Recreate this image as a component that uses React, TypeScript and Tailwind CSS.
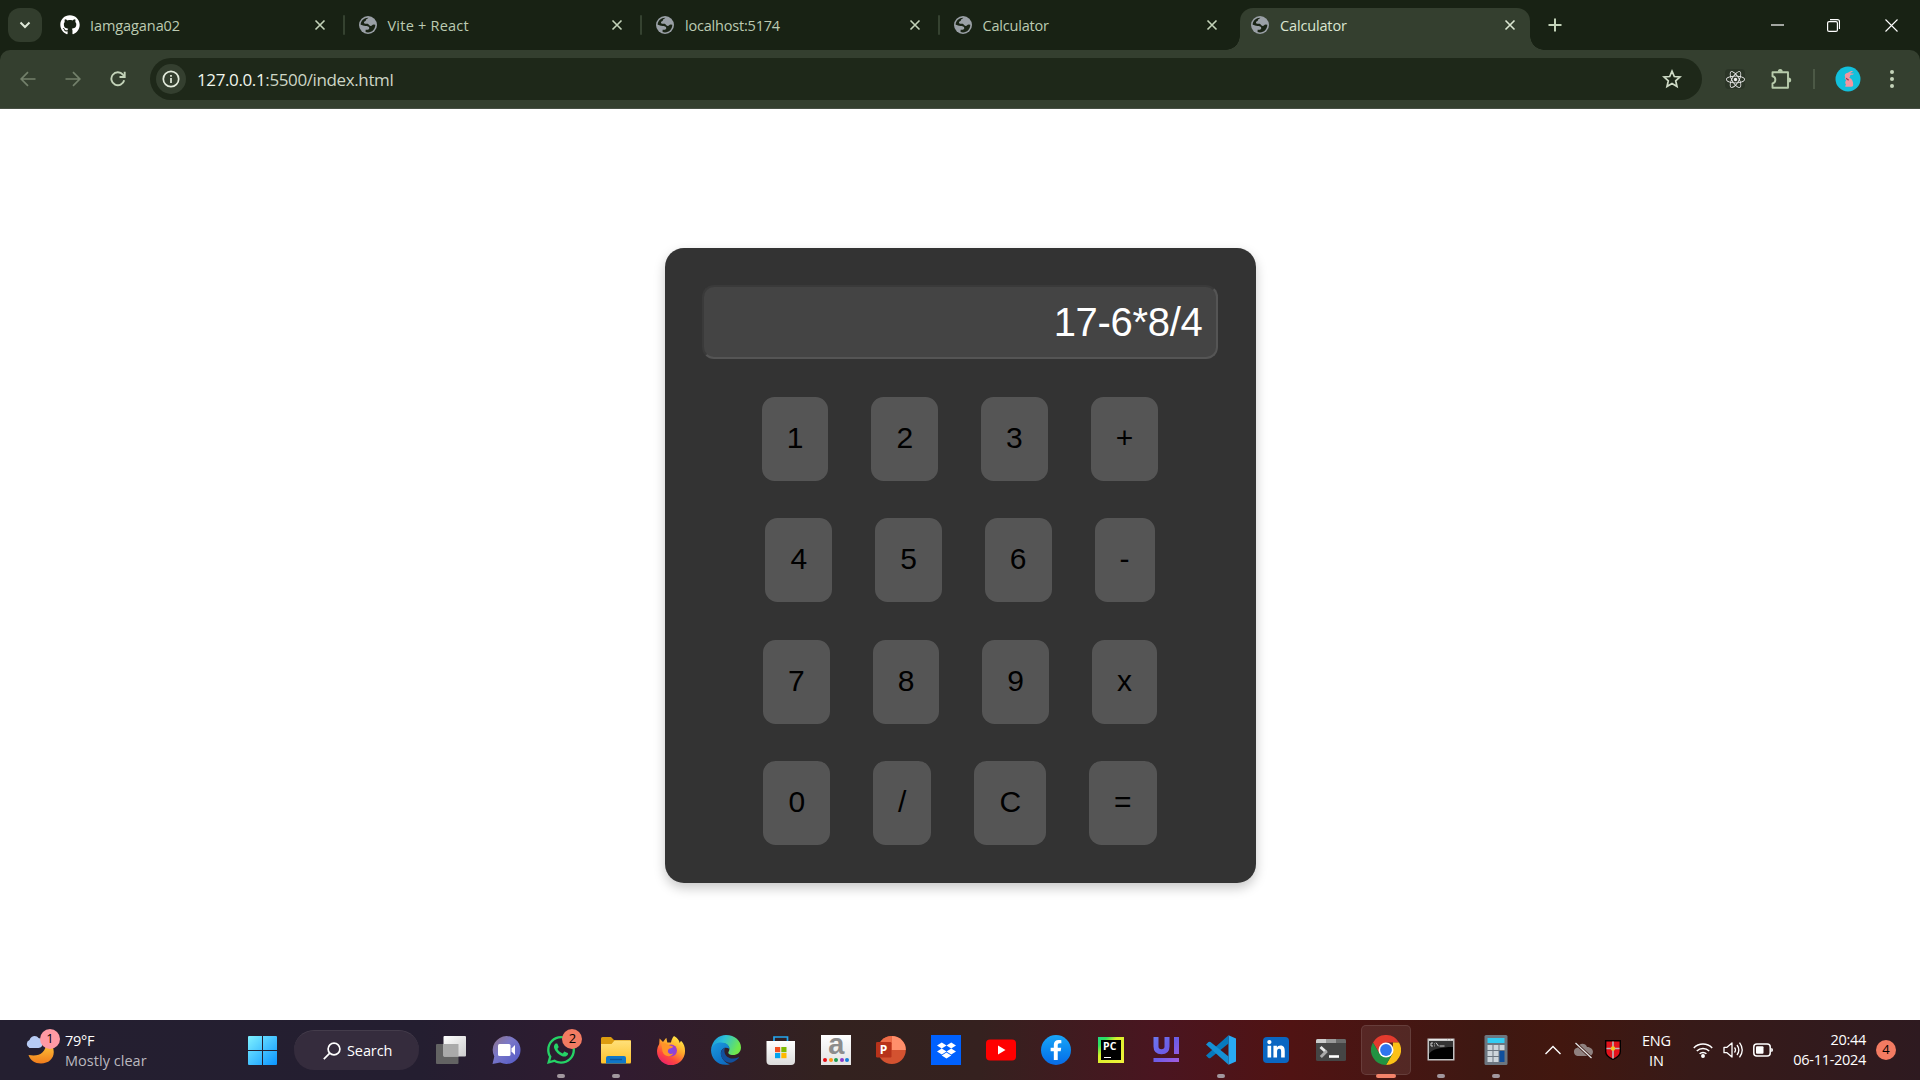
import React from "react";
import { FaReact, FaGithub, FaWhatsapp, FaDropbox, FaFacebookF, FaLinkedinIn } from "react-icons/fa";

const ui = "font-['Open_Sans','Noto_Sans',sans-serif]";

const Globe = () => (
  <svg viewBox="0 0 24 24" className="h-[18px] w-[18px] shrink-0">
    <circle cx="12" cy="12" r="12" fill="#9aa0a6" />
    <path className="fill-[#1a2415]" d="M12.500 2.200c-1 1.500-3.300 1.600-3.300 3.500 0 1.700-2.600 1-2.600 3 0 2.300 3.300 1.500 5 1.700 1.700.2 1.900 3 4 2.900 1.800 0 2-1.900 3.900-1.900l2.300.3C21.700 17.500 17.500 21.900 12 21.900c-1.200 0-2.200-.2-3.200-.5v-3c2.200 0 4.700.3 4.900-2.100.2-2.300-2.800-2.900-5.100-2.900-2.600 0-4-1.500-6.400-1.700C2.300 6 7 2 12.500 2.200z" />
  </svg>
);

const Close = ({ color }: { color: string }) => (
  <svg viewBox="0 0 12 12" className="h-3 w-3 shrink-0" stroke={color} strokeWidth="1.600" fill="none">
    <path d="M1.500 1.500l9 9M10.500 1.500l-9 9" />
  </svg>
);

const tabs = [
  { title: "Iamgagana02", github: true, spacing: "tracking-[-0.08px]" },
  { title: "Vite + React", spacing: "tracking-[0.22px]" },
  { title: "localhost:5174", spacing: "tracking-[-0.2px]" },
  { title: "Calculator", spacing: "tracking-[-0.2px]" },
];

function TabStrip() {
  return (
    <div className="flex h-[50px] items-center bg-[#182214]">
      <div className="ml-2 flex h-[34px] w-[34px] items-center justify-center rounded-xl bg-[#323d2d]">
        <svg viewBox="0 0 12 12" className="h-3 w-3" fill="none" stroke="#dfe8d8" strokeWidth="2"><path d="M1.500 3.500L6 8l4.500-4.500" /></svg>
      </div>
      <div className="ml-[5px] flex">
        {tabs.map((t, i) => (
          <div key={i} className="flex h-[34px] w-[297.500px] items-center">
            <div className="ml-3 flex w-[22px] justify-center">
              {t.github ? <FaGithub className="h-5 w-5 text-white" /> : <Globe />}
            </div>
            <span className={`ml-[9px] flex-1 pt-0.5 text-[14.500px] text-[#bccbb2] ${t.spacing}`}>{t.title}</span>
            <Close color="#c3d3b9" />
            <div className={i < 3 ? "ml-[17px] h-5 w-0.5 rounded bg-[#354230]" : "ml-[17px] h-5 w-0.5"} />
          </div>
        ))}
      </div>
      <div className="ml-[3px] flex h-[50px] items-end">
        <div className="relative flex h-[42px] w-[290px] items-center rounded-t-[13px] bg-[#343f2f] pb-[8px]">
          <div className="absolute -left-[14px] bottom-0 h-[14px] w-[14px] bg-[radial-gradient(circle_at_0_0,transparent_13.500px,#343f2f_14px)]" />
          <div className="absolute -right-[14px] bottom-0 h-[14px] w-[14px] bg-[radial-gradient(circle_at_100%_0,transparent_13.500px,#343f2f_14px)]" />
          <div className="ml-[9px] flex w-[22px] justify-center"><Globe /></div>
          <span className="ml-[9px] flex-1 pt-0.5 text-[14.500px] tracking-[-0.15px] text-[#dbe6d2]">Calculator</span>
          <Close color="#dbe6d2" />
          <div className="w-3.5" />
        </div>
      </div>
      <svg viewBox="0 0 14 14" className="ml-[18px] h-3.5 w-3.5" stroke="#c3d3b9" strokeWidth="2"><path d="M7 .5v13M.5 7h13" /></svg>
      <div className="ml-auto flex items-center pr-[22px]">
        <svg viewBox="0 0 13 13" className="h-[13px] w-[13px]" stroke="#fff" strokeWidth="1.200"><path d="M0 6h13" /></svg>
        <svg viewBox="0 0 13 13" className="ml-[43px] h-[13px] w-[13px]" stroke="#fff" strokeWidth="1.200" fill="none"><rect x=".6" y="2.600" width="9.800" height="9.800" rx="1.500" /><path d="M3 .7h7.500a2 2 0 0 1 2 2V10" /></svg>
        <svg viewBox="0 0 13 13" className="ml-[45px] h-[13px] w-[13px]" stroke="#fff" strokeWidth="1.100"><path d="M.5.5l12 12M12.500.5l-12 12" /></svg>
      </div>
    </div>
  );
}

function Toolbar() {
  return (
    <div className="bg-[#182214]">
      <div className="flex h-[59px] items-center rounded-t-[10px] border-b border-[#474f44] bg-[#343f2f]">
        <svg viewBox="0 0 16 16" className="ml-5 h-4 w-4" stroke="#73806b" strokeWidth="1.700" fill="none"><path d="M15.500 8H1.500M8 1.200L1.200 8 8 14.800" /></svg>
        <svg viewBox="0 0 16 16" className="ml-[29px] h-4 w-4" stroke="#73806b" strokeWidth="1.700" fill="none"><path d="M.5 8h14M8 1.200L14.800 8 8 14.800" /></svg>
        <svg viewBox="0 0 16 16" className="ml-[28.500px] h-4 w-4" stroke="#c3d3b9" strokeWidth="1.900" fill="none"><path d="M14.200 9.300A6.500 6.500 0 1 1 12.900 3.600L14.500 5.300" /><path d="M14.700 .8v5.200H9.500" /></svg>
        <div className="ml-[24.500px] flex h-[42px] w-[1552px] items-center rounded-full bg-[#1e2819]">
          <div className="ml-[6px] flex h-[30px] w-[30px] items-center justify-center rounded-full bg-[#343f2f]">
            <svg viewBox="0 0 18 18" className="h-[18px] w-[18px]" stroke="#e3ebdc" fill="none" strokeWidth="1.700"><circle cx="9" cy="9" r="7.700" /><path d="M9 8v5M9 5v1.800" /></svg>
          </div>
          <span className="ml-[11px] pt-px text-[17px] tracking-[-0.38px] text-[#cdd6c6]"><span className="text-[#f1f6ec]">127.0.0.1</span>:5500/index.html</span>
          <svg viewBox="0 0 20 20" className="mr-5 ml-auto h-5 w-5" stroke="#cfdbc6" strokeWidth="1.700" fill="none"><path d="M10 2.200l2.300 5.300 5.700.5-4.300 3.800 1.300 5.700-5-3-5 3 1.300-5.700L2 8l5.700-.5z" /></svg>
        </div>
        <div className="ml-[23px] flex h-5 w-5 items-center justify-center rounded-sm bg-[#2b3527]"><FaReact className="h-[19px] w-[19px] text-[#f0f0f0]" /></div>
        <svg viewBox="0 0 22 22" className="ml-[25px] h-[22px] w-[22px]" stroke="#b7cbab" strokeWidth="1.900" fill="none" strokeLinejoin="round"><path d="M2.500 4.200H18V19.700H2.500V15.500C6.300 14.700 6.300 9 2.500 8.300z" /><path d="M7.700 3.700a2.500 2.700 0 0 1 5 0zM18.500 9.500a2.700 2.500 0 0 1 0 5z" fill="#b7cbab" stroke="none" /></svg>
        <div className="ml-[21px] h-5 w-0.5 bg-[#4c5946]" />
        <svg viewBox="0 0 26 26" className="ml-[19.500px] h-[26px] w-[26px]">
          <circle cx="13" cy="13" r="12.500" fill="#12c0dc" />
          <path d="M9.700 9.500c.3-1.800 1.700-2.700 3.300-2.700 1.400-1.300 3.200-1.900 5-1.800-.7 1-1.900 1.700-3.200 2.300l4.400.5c-1.200.9-2.700 1.100-3.900 1.200 0 1.200-.5 2-1 2.700 2.900 1 4 3.700 3.900 7.400-.1 1.200-.6 1.700-1.700 1.700h-5c-1.700 0-1.800-1.600-.4-1.900-1.400-1.900-.9-3.700.2-5l-1.700-1.200.7-1.200z" fill="#f495a0" />
          <path d="M11 12.200l2.700 2" stroke="#9c3a50" strokeWidth="1.200" />
        </svg>
        <svg viewBox="0 0 6 20" className="ml-[28.500px] h-5 w-1.5" fill="#c3d3b9"><circle cx="3" cy="3" r="2" /><circle cx="3" cy="10" r="2" /><circle cx="3" cy="17" r="2" /></svg>
      </div>
    </div>
  );
}

const rows = [["1", "2", "3", "+"], ["4", "5", "6", "-"], ["7", "8", "9", "x"], ["0", "/", "C", "="]];

function Calculator() {
  return (
    <div className="mt-[139px] h-[635px] w-[591px] rounded-[19px] bg-[#333] pt-[37px] font-['Liberation_Sans',Arial,sans-serif] shadow-[0_5px_12px_rgba(0,0,0,0.22)]">
      <div className="mr-[38px] ml-[37.500px] flex h-[74px] items-center justify-end rounded-[12px] border-2 border-t-[#3a3a3a] border-r-[#555] border-b-[#555] border-l-[#3a3a3a] bg-[#444] pr-[13px] text-[40px] leading-none tracking-[-0.3px] text-white">
        17-6*8/4
      </div>
      <div className="mt-[38px] flex flex-col gap-[37.300px]">
        {rows.map((r, i) => (
          <div key={i} className="flex justify-center gap-[43px]">
            {r.map((k) => (
              <button key={k} className="h-[84px] rounded-[12.500px] bg-[#555] px-[25px] pb-[2px] text-[30px] leading-[34px] text-black">{k}</button>
            ))}
          </div>
        ))}
      </div>
    </div>
  );
}

const i30 = "h-[30px] w-[30px]";

const TaskView = () => (
  <svg viewBox="0 0 30 30" className={i30}>
    <defs><linearGradient id="tv1" x1="0" y1="0" x2="1" y2="1"><stop stopColor="#fff" /><stop offset="1" stopColor="#ccc" /></linearGradient></defs>
    <rect x="0" y="9" width="22.500" height="20" rx="1" fill="#636363" />
    <rect x="7.500" y="1" width="22.500" height="20.500" rx="1" fill="url(#tv1)" />
    <path d="M7.500 9h15v12.500h-15z" fill="#aaa" />
  </svg>
);
const Chat = () => (
  <svg viewBox="0 0 30 30" className={i30}>
    <defs><linearGradient id="ch" x1="0" y1="0" x2="1" y2="1"><stop stopColor="#8f7080" /><stop offset=".4" stopColor="#7b78c8" /><stop offset="1" stopColor="#5058c8" /></linearGradient></defs>
    <path d="M15.500 1a14 14 0 1 1-6.300 26.500L1.500 29l1.800-7.500A14 14 0 0 1 15.500 1z" fill="url(#ch)" />
    <rect x="7" y="9" width="12.500" height="12" rx="1.500" fill="#fff" /><path d="M20.500 13.500l3.500-3.500v10l-3.500-3.500z" fill="#fff" />
  </svg>
);
const Explorer = () => (
  <svg viewBox="0 0 30 30" className={i30}>
    <defs><linearGradient id="ex" x1="0" y1="0" x2="0" y2="1"><stop stopColor="#ffe07a" /><stop offset="1" stopColor="#fdc22a" /></linearGradient></defs>
    <path d="M0 3.500Q0 2 1.500 2H10l3 3H29q1 0 1 1v9H0z" fill="#dc9c10" />
    <path d="M0 9h10.500l3-3.500H29q1 0 1 1V27q0 1.500-1 1.500H1Q0 28.500 0 27z" fill="url(#ex)" />
    <path d="M5 28.500V23q0-2 2-2h16q2 0 2 2v5.500z" fill="#0f77c8" /><path d="M9 24.500h12" stroke="#0a559b" strokeWidth="1.400" />
  </svg>
);
const Firefox = () => (
  <svg viewBox="0 0 30 30" className={i30}>
    <defs>
      <linearGradient id="ff" x1=".8" y1="0" x2=".2" y2="1"><stop stopColor="#fff24a" /><stop offset=".4" stopColor="#ffa52a" /><stop offset=".7" stopColor="#ff4a3d" /><stop offset="1" stopColor="#e81a72" /></linearGradient>
      <radialGradient id="fp"><stop stopColor="#7b4ee8" /><stop offset="1" stopColor="#a23bc8" /></radialGradient>
    </defs>
    <path d="M18 1c3.500 1.500 5.200 4.500 5.700 7l1.300-2.300C28 8.500 29 12 29 15.500A14 13.800 0 1 1 3.200 9l.4-5.500L7 7l3.300-4.200 1 4.700h3.700C15.300 5.200 16.500 2.500 18 1z" fill="url(#ff)" />
    <circle cx="15" cy="15.500" r="6" fill="url(#fp)" />
    <path d="M5.500 9.500c3-2.500 5-1 7 .5l4.700 1.600c-.5 2-4.500 1.400-5 3.500-1.400 3 2 4.900 5 3.500-2.200 4-9.200 3.500-10.700-2z" fill="#ff9428" />
  </svg>
);
const Edge = () => (
  <svg viewBox="0 0 30 30" className={i30}>
    <defs>
      <linearGradient id="eg" x1="0" y1="0" x2="1" y2=".35"><stop stopColor="#1690d8" /><stop offset=".45" stopColor="#2cc0d8" /><stop offset="1" stopColor="#70e84c" /></linearGradient>
      <linearGradient id="eb" x1="0" y1="0" x2=".6" y2="1"><stop stopColor="#1b9be0" /><stop offset="1" stopColor="#0d6cc2" /></linearGradient>
    </defs>
    <path d="M0 15C1 5 8 0 15 0c9 0 15 6 15 12.500 0 5-4 7.500-8 7.500-3.500 0-5.500-1.300-4.400-3.200 2.300-3.200-.2-8.800-6.600-8.800C5.500 8 1 11.500 0 15z" fill="url(#eg)" />
    <path d="M0 15C1 10 5 7.500 10 7.500c5 0 8.500 2.800 8.500 6.500-5-3.500-10 1-8.300 6.500C11.500 25 15 28.500 19 29.300 8 32 0 24.500 0 15z" fill="url(#eb)" />
    <path d="M14 12.500c-4 2-5.300 6-3 10.200 3 5.500 10 7.500 16.800.3.500-.6 0-1-.8-.5-5.500 2.500-12.700.5-13.500-5.500-.2-1.700 0-3 .5-4.500z" fill="#124f9c" />
  </svg>
);
const Store = () => (
  <svg viewBox="0 0 30 30" className={i30}>
    <defs><linearGradient id="st" x1="0" y1="0" x2="0" y2="1"><stop stopColor="#fff" /><stop offset="1" stopColor="#dcdcdc" /></linearGradient></defs>
    <path d="M.5 6h28.500v20q0 4-4 4h-20.500q-4 0-4-4z" fill="url(#st)" />
    <path d="M8 6V2h13.500v4" fill="none" stroke="#25a6ef" strokeWidth="1.700" />
    <path d="M9 12h5.200v5.200H9z" fill="#f25022" /><path d="M15.300 12h5.200v5.200h-5.200z" fill="#7fba00" /><path d="M9 18h5.200v5.200H9z" fill="#00a4ef" /><path d="M15.300 18h5.200v5.200h-5.200z" fill="#ffb900" />
  </svg>
);
const Amazon = () => (
  <div className="flex h-[30px] w-[30px] flex-col items-center bg-gradient-to-b from-white to-[#e2e2e2]">
    <span className="-mt-[3px] h-[24px] font-['Liberation_Sans',sans-serif] text-[29px] leading-[24px] font-bold text-[#8d8d8d]">a</span>
    <div className="mt-[2px] flex gap-[1.500px]">
      <i className="h-1 w-1 rounded-full bg-[#e60b12]" /><i className="h-1 w-1 rounded-full bg-[#ff9718]" /><i className="h-1 w-1 rounded-full bg-[#1d9c50]" /><i className="h-1 w-1 rounded-full bg-[#8a3ccc]" /><i className="h-1 w-1 rounded-full bg-[#1580d8]" />
    </div>
  </div>
);
const PowerPoint = () => (
  <div className="relative h-[30px] w-[30px]">
    <svg viewBox="0 0 30 30" className={i30}>
      <circle cx="15.800" cy="15" r="14" fill="#d35230" /><path d="M15.800 1a14 14 0 0 1 14 14h-14z" fill="#ff8f6b" /><path d="M15.800 1v14h-14a14 14 0 0 1 14-14z" fill="#ed6c47" />
      <rect x="0" y="7" width="15.500" height="15.500" rx="1.200" fill="#b7321a" />
    </svg>
    <span className="absolute top-[7px] left-[3.500px] text-[12px] leading-[15px] font-bold text-white">P</span>
  </div>
);
const YouTube = () => (
  <svg viewBox="0 0 30 30" className={i30}><rect x="0" y="4.500" width="30" height="21" rx="4" fill="#f00" /><path d="M12 10.500l7.500 4.500-7.500 4.500z" fill="#fff" /></svg>
);
const PyCharm = () => (
  <div className="flex h-[26px] w-[26px] flex-col bg-[linear-gradient(135deg,#21d789_0%,#2fe05a_18%,#d8f02a_38%,#f2f23c_100%)] p-[3px]">
    <div className="relative h-5 w-5 bg-black">
      <span className="absolute top-[1px] left-[2px] text-[10.500px] leading-[11px] font-bold text-white">PC</span>
      <i className="absolute bottom-[2px] left-[2.500px] h-[1.500px] w-[7px] bg-white" />
    </div>
  </div>
);
const UiLogo = () => (
  <svg viewBox="0 0 30 30" className={i30}>
    <defs><linearGradient id="ui" x1="0" y1="0" x2="30" y2="30" gradientUnits="userSpaceOnUse"><stop stopColor="#6b7cf0" /><stop offset=".5" stopColor="#6c5ce6" /><stop offset="1" stopColor="#b05cdc" /></linearGradient></defs>
    <path d="M5 2v9.500q0 5.200 5.500 5.200t5.500-5.200V2M25.500 2v17" fill="none" stroke="url(#ui)" strokeWidth="5" />
    <rect x="2.500" y="23" width="25.500" height="4" fill="url(#ui)" />
  </svg>
);
const VsCode = () => (
  <svg viewBox="0 0 30 30" className={i30}>
    <path d="M22.500.3L30 3.500v23l-7.500 3.300z" fill="#29aaf3" />
    <path d="M0 20.500L2.500 23q1 .5 2 0L22.500 8.500V.3z" fill="#0779bd" />
    <path d="M0 9.500L2.500 7q1-.5 2 0L22.500 21.500v8.300z" fill="#1590d5" />
  </svg>
);
const Terminal = () => (
  <svg viewBox="0 0 30 30" className={i30}>
    <rect y="4" width="30" height="22" rx="1.500" fill="#454545" /><path d="M0 8V5.500Q0 4 1.500 4H10v4z" fill="#ccc" /><path d="M10 4h10v4H10z" fill="#999" /><path d="M20 4h8.500Q30 4 30 5.500V8H20z" fill="#6a6a6a" />
    <path d="M4.500 12l5.500 5" stroke="#e8e8e8" strokeWidth="3" /><path d="M10.800 16l-6 6" stroke="#aaa" strokeWidth="3" /><path d="M13 21.500h10" stroke="#fff" strokeWidth="2.600" />
  </svg>
);
const Chrome = () => (
  <svg viewBox="0 0 30 30" className={i30}>
    <path d="M2 7.500A15 15 0 0 1 28 7.500H15L8.500 18.700z" fill="#e33b2e" />
    <path d="M28 7.500A15 15 0 0 1 15 30l6.500-11.300L22 7.500z" fill="#fbc116" />
    <path d="M2 7.500A15 15 0 0 0 15 30l6.500-11.300L15 22.500 8.500 18.700z" fill="#229342" />
    <circle cx="15" cy="15" r="7.500" fill="#fff" /><circle cx="15" cy="15" r="5.900" fill="#2e75ee" />
  </svg>
);
const Cmd = () => (
  <svg viewBox="0 0 30 30" className={i30}>
    <rect x="1.500" y="3.500" width="27" height="22" fill="#c2c2c2" /><path d="M3 6h24v18H3z" fill="#000" /><path d="M3 6h24v6C15 12 6 14 3 19z" fill="#333" /><path d="M3 4.700h24" stroke="#eee" strokeDasharray="18 1 2 1" />
    <path d="M5 8h2M5 8v3h2M8.500 8.500v.8M8.500 10.500v.8M10 7.700l2.500 3.500M13.500 11h5" stroke="#ddd" strokeWidth=".9" fill="none" />
  </svg>
);
const CalcIcon = () => (
  <svg viewBox="0 0 30 30" className={i30}>
    <rect x="3.500" width="23" height="30" rx="1.500" fill="#6c7680" /><path d="M6.500 3h17v5h-17z" fill="#32ccf2" />
    <path d="M6.500 10h5v5h-5zM12.500 10h5v5h-5zM18.500 10h5v5h-5zM6.500 16h5v5h-5zM12.500 16h5v5h-5zM6.500 22h5v5h-5zM12.500 22h5v5h-5z" fill="#cdd5db" /><path d="M18.500 16h5v11h-5z" fill="#0f4f9c" />
  </svg>
);
const WhatsApp = () => (
  <div className="relative">
    <FaWhatsapp className="h-[32px] w-[32px] text-[#25d366]" />
    <span className="absolute -top-[5px] left-[17px] flex h-5 w-5 items-center justify-center rounded-full bg-[#f37b62] text-[13px] text-black">2</span>
  </div>
);

const apps: { icon: React.ReactNode; mark?: "idle" | "active" }[] = [
  { icon: <TaskView /> }, { icon: <Chat /> }, { icon: <WhatsApp />, mark: "idle" }, { icon: <Explorer />, mark: "idle" },
  { icon: <Firefox /> }, { icon: <Edge /> }, { icon: <Store /> }, { icon: <Amazon /> }, { icon: <PowerPoint /> },
  { icon: <div className="flex h-[30px] w-[30px] items-center justify-center bg-[#0061fe]"><FaDropbox className="h-[19px] w-[19px] text-white" /></div> },
  { icon: <YouTube /> },
  { icon: <div className="flex h-[30px] w-[30px] items-center justify-center rounded-full bg-gradient-to-b from-[#1aa5f8] to-[#0a6ae6]"><FaFacebookF className="h-5 w-5 text-white" /></div> },
  { icon: <PyCharm /> }, { icon: <UiLogo /> }, { icon: <VsCode />, mark: "idle" },
  { icon: <div className="flex h-[26px] w-[26px] items-center justify-center rounded-sm bg-[#0a66c2]"><FaLinkedinIn className="h-5 w-5 text-white" /></div> },
  { icon: <Terminal /> }, { icon: <Chrome />, mark: "active" }, { icon: <Cmd />, mark: "idle" }, { icon: <CalcIcon />, mark: "idle" },
];

function Taskbar() {
  return (
    <div className="flex h-[60px] items-center bg-[linear-gradient(90deg,#241f30_0px,#241e30_420px,#311b30_620px,#33221f_830px,#35211f_980px,#4a1520_1160px,#501313_1290px,#3e1812_1480px,#42170f_1560px,#371a18_1690px,#2e1a20_1920px)] text-white">
      <div className="flex w-[248px] items-center">
        <div className="relative ml-[25px] h-[34px] w-[30px]">
          <svg viewBox="0 0 30 34" className="h-[34px] w-[30px]">
            <defs><linearGradient id="mn" x1="0" y1="0" x2="0" y2="1"><stop stopColor="#ffc83a" /><stop offset="1" stopColor="#f07c1c" /></linearGradient></defs>
            <path d="M27.500 13c4 10-2 17.500-11.500 17.500-6 0-11-3.500-12.500-8.500C14 24 21 20 21 10z" fill="url(#mn)" />
            <path d="M4.500 15a4.300 4.300 0 0 1 0-8C6 2 12 2 13.500 5c5 0 6 10 0 10z" fill="#b7cbf4" />
          </svg>
          <span className="absolute -top-[4px] left-[15px] flex h-5 w-5 items-center justify-center rounded-full bg-[#ff99a4] text-[13px] text-black">1</span>
        </div>
        <div className="ml-[10px] pt-0.5 text-[14.500px] leading-[20px] tracking-[-0.3px]">
          <div>79°F</div><div className="tracking-[0.03px] text-[#bab8bf]">Mostly clear</div>
        </div>
      </div>
      <svg viewBox="0 0 29 29" className="h-[29px] w-[29px]">
        <defs><linearGradient id="wn" x1="0" y1="0" x2="29" y2="29" gradientUnits="userSpaceOnUse"><stop stopColor="#7ff1ff" /><stop offset="1" stopColor="#0a94ff" /></linearGradient></defs>
        <path d="M0 1q0-1 1-1h13v14H0zM15 0h13q1 0 1 1v13H15zM0 15h14v14H1q-1 0-1-1zM15 15h14v13q0 1-1 1H15z" fill="url(#wn)" />
      </svg>
      <div className="ml-[17px] flex h-10 w-[125px] items-center rounded-full border-t border-[#443c4b] bg-[#352c3d]">
        <svg viewBox="0 0 18 18" className="ml-[29px] h-[18px] w-[18px]" fill="none" stroke="#fff" strokeWidth="1.700"><circle cx="11" cy="7" r="5.900" /><path d="M6.800 11.200L.8 17.200" /></svg>
        <span className="ml-[6px] text-[14.500px] tracking-[-0.1px]">Search</span>
      </div>
      <div className="ml-[5px] flex">
        {apps.map((a, i) => (
          <div key={i} className="relative flex h-[60px] w-[54.970px] items-center justify-center">
            {a.mark === "active" && <div className="absolute inset-x-[2.500px] inset-y-[5px] rounded-[5px] border border-white/10 bg-white/8" />}
            <div className="relative">{a.icon}</div>
            {a.mark === "idle" && <i className="absolute bottom-[2px] h-1 w-2 rounded-full bg-[#a1979e]" />}
            {a.mark === "active" && <i className="absolute bottom-[2px] h-1 w-5 rounded-full bg-[#f4836a]" />}
          </div>
        ))}
      </div>
      <svg viewBox="0 0 16 10" className="ml-[22px] h-[10px] w-4" fill="none" stroke="#fff" strokeWidth="1.400"><path d="M.5 9L8 1.500 15.500 9" /></svg>
      <svg viewBox="0 0 20 18" className="ml-[12px] h-[18px] w-5"><path d="M4.500 15a4.200 4.200 0 0 1 0-8.300c1.500-5 8-5 9.500-.8 6 0 8 6 3.500 9.100z" fill="#8f817f" /><path d="M2.500 2l16 15" stroke="#3d1812" strokeWidth="3" /><path d="M2.500 2l16 15" stroke="#e8e8e8" strokeWidth="1.200" /></svg>
      <svg viewBox="0 0 16 20" className="ml-[12px] h-5 w-4"><path d="M.7.700h14.600v11q0 4.500-7.300 7.600Q.7 16.200.7 11.700z" fill="#e3121b" stroke="#000" strokeWidth="1.400" /><path d="M8 1.500v17M1.500 8.500h13" stroke="#b9b9b9" strokeWidth="1.600" /><circle cx="8" cy="8.500" r="2.200" fill="#f5c421" /></svg>
      <div className="ml-[20px] w-[30px] pt-0.5 text-center text-[14.500px] leading-5 tracking-[-0.2px]"><div>ENG</div><div>IN</div></div>
      <svg viewBox="0 0 20 16" className="ml-[22px] h-4 w-5" fill="none" stroke="#fff" strokeWidth="1.500"><path d="M.8 6a12.800 12.800 0 0 1 18.400 0M3.800 9a8.700 8.700 0 0 1 12.400 0M6.600 11.800a4.800 4.800 0 0 1 6.800 0" /><circle cx="10" cy="14" r="1.200" fill="#fff" /></svg>
      <svg viewBox="0 0 20 18" className="ml-[10px] h-[18px] w-5" fill="none" stroke="#fff" strokeWidth="1.300"><path d="M1 6.300h3L9 2v14l-5-4.300H1z" strokeLinejoin="round" /><path d="M11.500 6.500q2 2.500 0 5M14 4q3.700 5 0 10M16.500 1.700q5.500 7.300 0 14.600" /></svg>
      <svg viewBox="0 0 20 14" className="ml-[10px] h-[14px] w-5"><rect x=".8" y="1" width="16.400" height="12" rx="3" fill="none" stroke="#fff" strokeWidth="1.500" /><rect x="3" y="3.200" width="7.500" height="7.600" rx="1" fill="#fff" /><path d="M18.200 5q1.800 0 1.800 2t-1.800 2z" fill="#fff" /></svg>
      <div className="ml-auto text-right text-[14.500px] leading-5 tracking-[-0.3px]"><div>20:44</div><div>06-11-2024</div></div>
      <span className="mr-6 ml-[10px] flex h-5 w-5 items-center justify-center rounded-full bg-[#f37b62] text-[13px] text-black">4</span>
    </div>
  );
}

export default function App() {
  return (
    <div className={`flex h-[1080px] w-[1920px] flex-col overflow-hidden bg-white ${ui} [&_span]:whitespace-nowrap`}>
      <TabStrip />
      <Toolbar />
      <main className="flex flex-1 justify-center">
        <Calculator />
      </main>
      <Taskbar />
    </div>
  );
}
